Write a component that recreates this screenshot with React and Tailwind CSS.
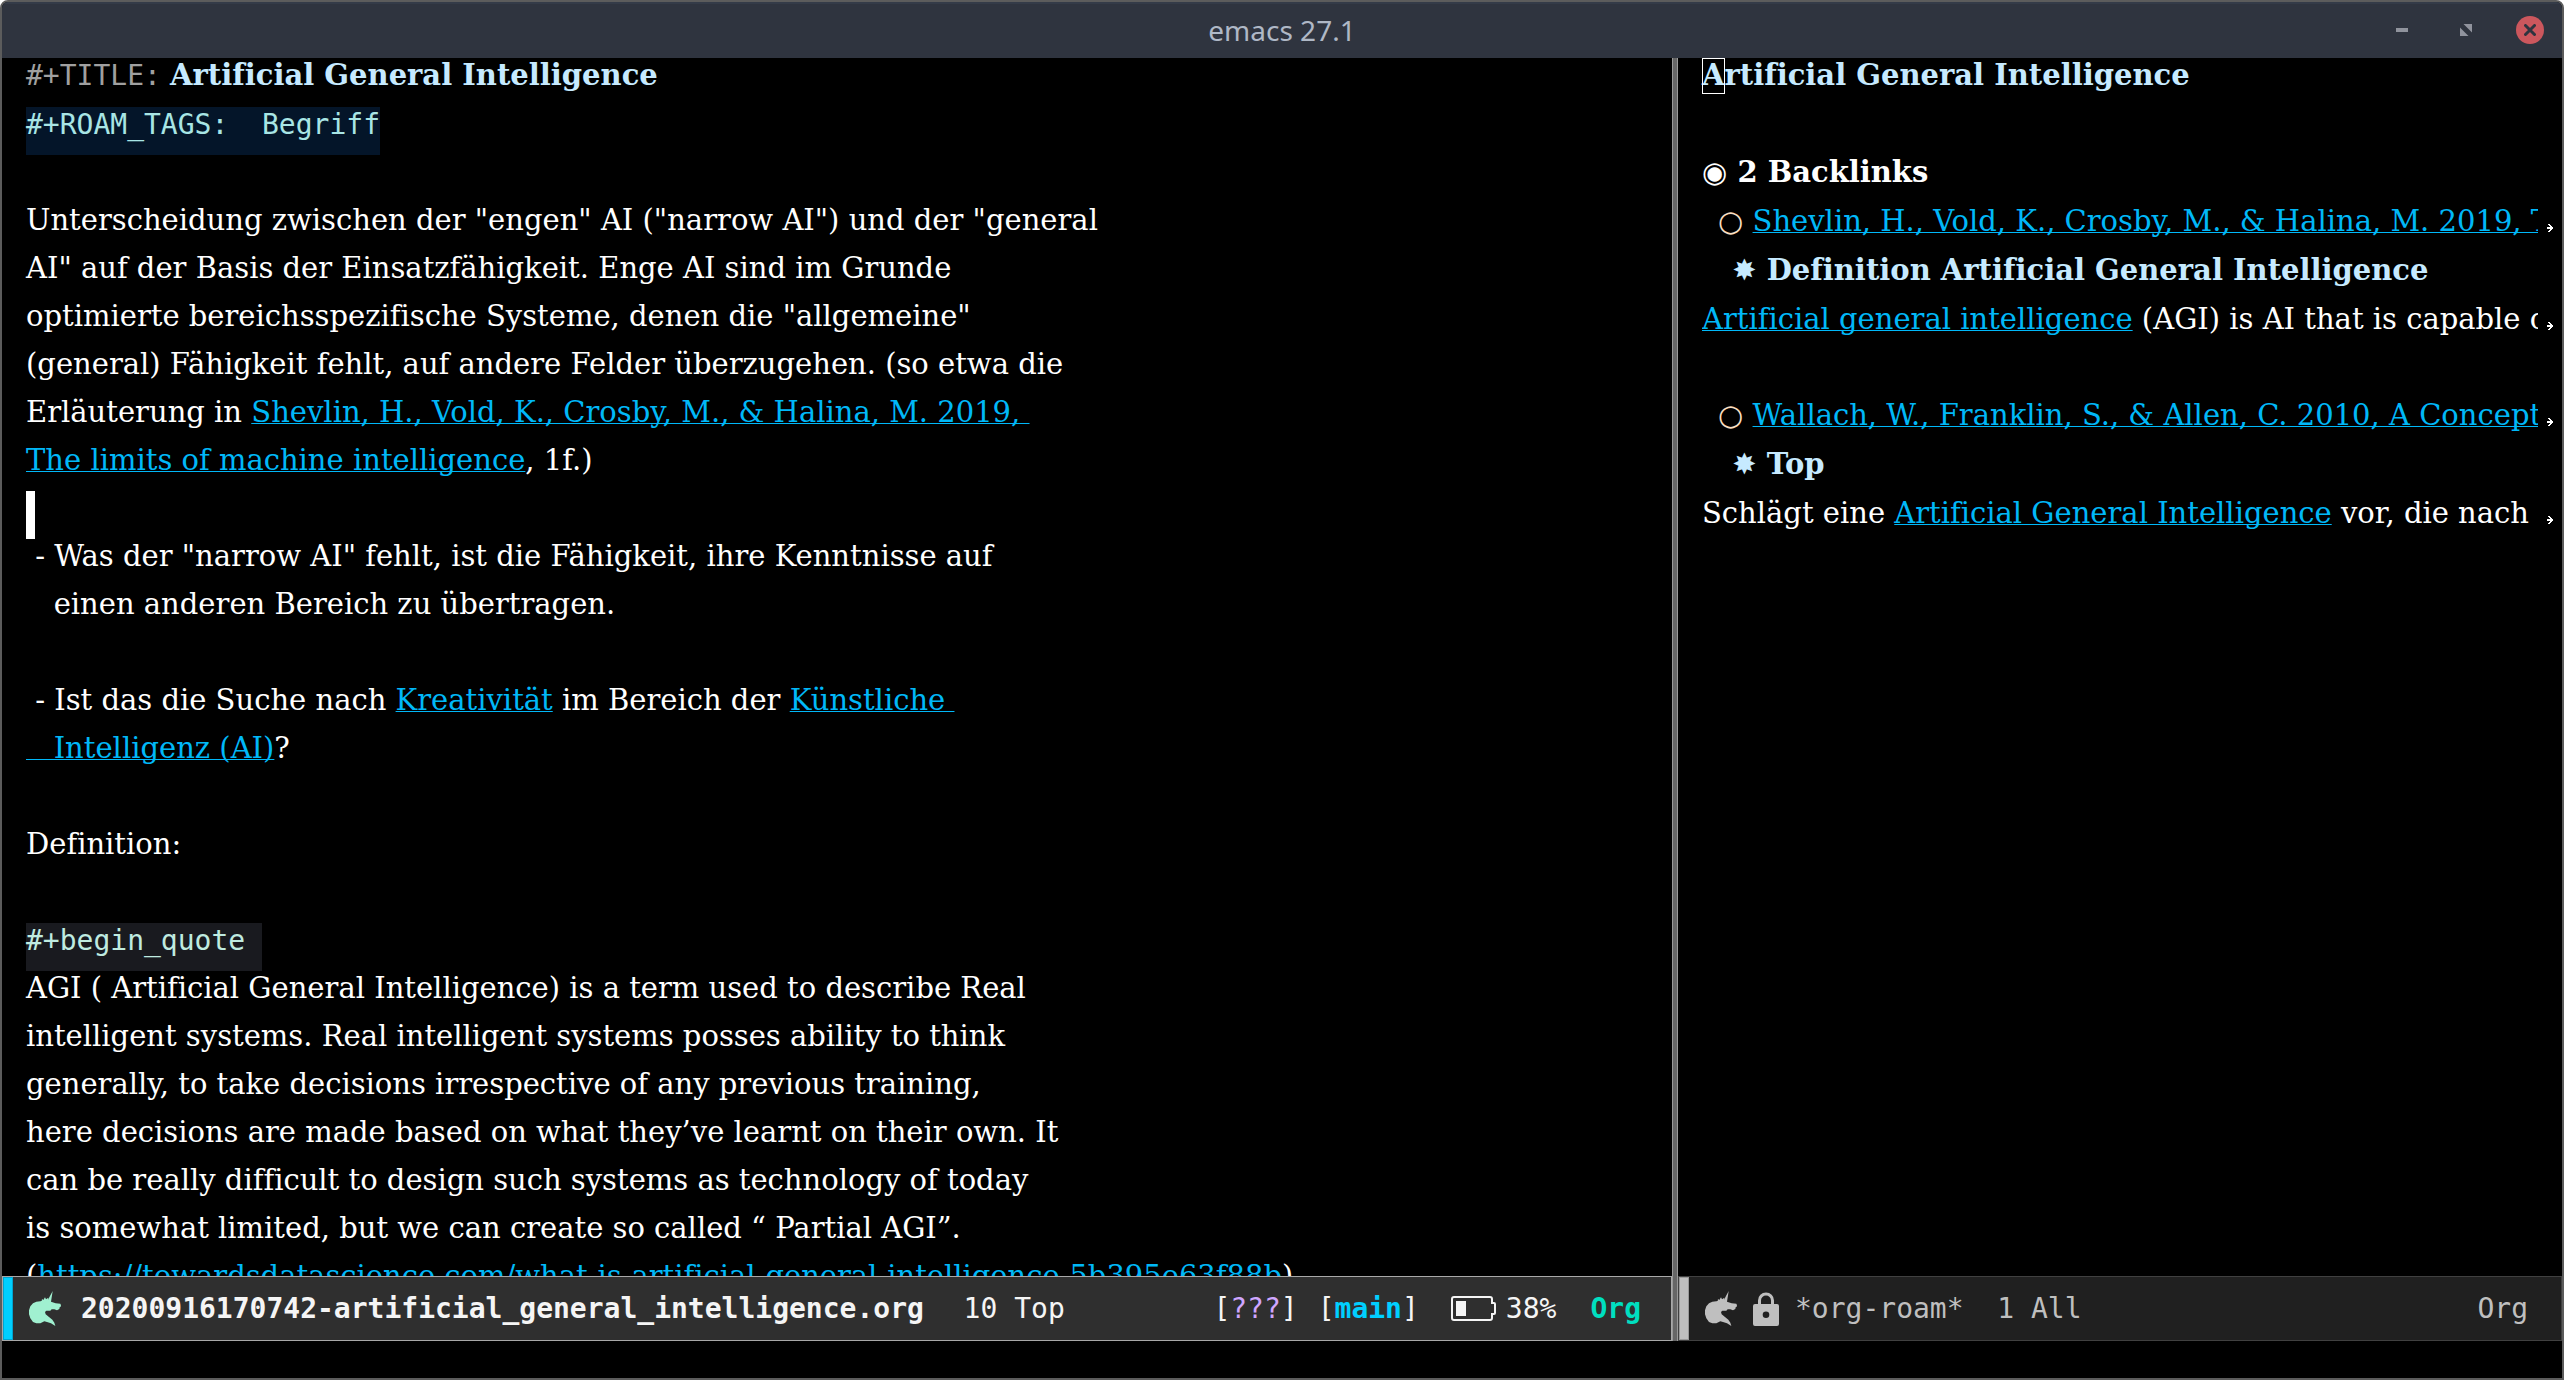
const LINK =
  'text-[#00b8f8] underline decoration-1 underline-offset-1 [text-decoration-skip-ink:none]';

function Link({ children }) {
  return (
    <a href="#" className={LINK}>
      {children}
    </a>
  );
}

function Row({ children, tall = false }) {
  return (
    <div className={tall ? 'h-[49px] shrink-0' : 'h-12 shrink-0'}>{children}</div>
  );
}

function Unicorn() {
  return (
    <svg viewBox="0 0 96 105" className="h-[35px] w-8 shrink-0 fill-current" aria-hidden="true">
      <path d="M71 0L66 32L80 37L94 38L96 43L95 47L92 49L91 54L84 58L76 55L68 55L64 59L52 59L48 63L50 70L60 78L70 86L76 95L79 105L66 97L54 93L46 91L34 97L22 97L12 93L4 82L0 70L0 58L4 46L12 37L22 32L34 31L38 30L39 24L43 27L48 19L51 25L58 20L57 26Z" />
    </svg>
  );
}

function Lock() {
  return (
    <svg viewBox="0 0 26 34" className="h-[34px] w-[26px] shrink-0" aria-hidden="true">
      <path d="M6.5 13V8.500a6.500 6.500 0 0 1 13 0V13" fill="none" stroke="currentColor" strokeWidth="3" />
      <path
        fillRule="evenodd"
        fill="currentColor"
        d="M2 12H24a2 2 0 0 1 2 2V32a2 2 0 0 1-2 2H2a2 2 0 0 1-2-2V14a2 2 0 0 1 2-2ZM13 19.500a3.300 3.300 0 1 0 0 6.600a3.300 3.300 0 1 0 0-6.600Z"
      />
    </svg>
  );
}

function Battery() {
  return (
    <svg viewBox="0 0 45 25" className="h-[25px] w-[45px] shrink-0" aria-hidden="true">
      <path
        d="M3 1H39a2 2 0 0 1 2 2V7H43a1 1 0 0 1 1 1V17a1 1 0 0 1-1 1H41V22a2 2 0 0 1-2 2H3a2 2 0 0 1-2-2V3a2 2 0 0 1 2-2Z"
        fill="none"
        stroke="#f5f5f5"
        strokeWidth="2"
      />
      <rect x="5" y="5" width="10" height="15" fill="#f5f5f5" />
    </svg>
  );
}

function Continued() {
  return (
    <svg viewBox="0 0 6 8" className="h-2 w-1.5" shapeRendering="crispEdges" aria-hidden="true">
      <path d="M1 0H3V1H4V2H5V3H6V5H5V6H4V7H3V8H1V7H2V6H3V5H0V3H3V2H2V1H1Z" fill="#fff" />
    </svg>
  );
}

function CutRow({ children, tall = false }) {
  return (
    <Row tall={tall}>
      <div className="flex">
        <div className="min-w-0 flex-1 overflow-hidden whitespace-pre">{children}</div>
        <div className="flex w-6 shrink-0 items-center justify-center pt-3">
          <Continued />
        </div>
      </div>
    </Row>
  );
}

function TitleBar() {
  return (
    <header className="grid h-14 shrink-0 grid-cols-[1fr_auto_1fr] items-center border-t-2 border-[#343b48] bg-[#2f343f] pb-0.5 font-['Noto_Sans'] text-[#afb8c6]">
      <span />
      <h1 className="text-[28px] leading-8">emacs 27.1</h1>
      <div className="flex justify-end gap-9 pr-[18px] text-[#90939d]">
        <button aria-label="Minimize" className="flex size-7 items-center justify-center">
          <svg viewBox="0 0 12 4" className="h-1 w-3 fill-current"><path d="M0 0H12V4H0Z" /></svg>
        </button>
        <button aria-label="Restore" className="flex size-7 items-center justify-center">
          <svg viewBox="0 0 12 12" className="size-3 fill-current"><path d="M3.500 0H12V8.500ZM0 3.500V12H8.500Z" /></svg>
        </button>
        <button aria-label="Close" className="flex size-7 items-center justify-center rounded-full bg-[#cc575d]">
          <svg viewBox="0 0 12 12" className="size-3"><path d="M1.500 1.500L10.500 10.500M10.500 1.500L1.500 10.500" stroke="#2f343f" strokeWidth="3" strokeLinecap="round" /></svg>
        </button>
      </div>
    </header>
  );
}

function NotesPane() {
  return (
    <section className="flex min-h-0 flex-1 flex-col overflow-hidden whitespace-pre pl-6">
      <Row tall>
        <span className="font-['DejaVu_Sans_Mono'] text-[28px] text-[#a0a0a0]">#+TITLE:</span>
        <span> </span>
        <b className="text-[#c6eaff]">Artificial General Intelligence</b>
      </Row>
      <Row>
        <span className="inline-block h-12 bg-[#041529] font-['DejaVu_Sans_Mono'] text-[28px] text-[#a8e5e5]">#+ROAM_TAGS:  Begriff</span>
      </Row>
      <Row />
      <Row>Unterscheidung zwischen der "engen" AI ("narrow AI") und der "general</Row>
      <Row>AI" auf der Basis der Einsatzfähigkeit. Enge AI sind im Grunde</Row>
      <Row>optimierte bereichsspezifische Systeme, denen die "allgemeine"</Row>
      <Row>(general) Fähigkeit fehlt, auf andere Felder überzugehen. (so etwa die</Row>
      <Row>Erläuterung in <Link>{'Shevlin, H., Vold, K., Crosby, M., & Halina, M. 2019, '}</Link></Row>
      <Row><Link>The limits of machine intelligence</Link>, 1f.)</Row>
      <Row><div className="h-12 w-[9px] bg-white" /></Row>
      <Row>{' - Was der "narrow AI" fehlt, ist die Fähigkeit, ihre Kenntnisse auf'}</Row>
      <Row>{'   einen anderen Bereich zu übertragen.'}</Row>
      <Row />
      <Row>{' - Ist das die Suche nach '}<Link>Kreativität</Link>{' im Bereich der '}<Link>{'Künstliche '}</Link></Row>
      <Row><Link>{'   Intelligenz (AI)'}</Link>?</Row>
      <Row />
      <Row>Definition:</Row>
      <Row />
      <Row>
        <span className="inline-block h-12 bg-[#191a1f] font-['DejaVu_Sans_Mono'] text-[28px] text-[#bfebe0]">{'#+begin_quote '}</span>
      </Row>
      <Row>AGI ( Artificial General Intelligence) is a term used to describe Real</Row>
      <Row>intelligent systems. Real intelligent systems posses ability to think</Row>
      <Row>generally, to take decisions irrespective of any previous training,</Row>
      <Row>here decisions are made based on what they’ve learnt on their own. It</Row>
      <Row>can be really difficult to design such systems as technology of today</Row>
      <Row>is somewhat limited, but we can create so called “ Partial AGI”.</Row>
      <Row>(<Link>https://towardsdatascience.com/what-is-artificial-general-intelligence-5b395e63f88b</Link>)</Row>
    </section>
  );
}

function BacklinksPane() {
  return (
    <section className="flex min-h-0 flex-1 flex-col overflow-hidden whitespace-pre pl-6">
      <Row tall>
        <b className="text-[#c6eaff]"><span className="inline-block h-9 outline-1 -outline-offset-1 outline-white">A</span>rtificial General Intelligence</b>
      </Row>
      <Row />
      <Row tall><b>◉ 2 Backlinks</b></Row>
      <CutRow tall><span className="pl-4 text-[#f8dec0]">○</span> <Link>Shevlin, H., Vold, K., Crosby, M., & Halina, M. 2019, The limits of machine intelligence</Link></CutRow>
      <Row tall><b className="text-[#c6eaff]">{'   ✸ Definition Artificial General Intelligence'}</b></Row>
      <CutRow><Link>Artificial general intelligence</Link> (AGI) is AI that is capable of</CutRow>
      <Row />
      <CutRow tall><span className="pl-4 text-[#f8dec0]">○</span> <Link>Wallach, W., Franklin, S., & Allen, C. 2010, A Conceptual</Link></CutRow>
      <Row tall><b className="text-[#c6eaff]">{'   ✸ Top'}</b></Row>
      <CutRow>Schlägt eine <Link>Artificial General Intelligence</Link>{' vor, die nach '}</CutRow>
    </section>
  );
}

export default function App() {
  return (
    <div className="h-screen bg-white">
      <div className="flex h-full flex-col overflow-hidden rounded-t-lg border-2 border-[#5c5c5c] bg-black text-[29px] leading-[35px] text-white [font-variant-ligatures:none]">
        <TitleBar />
        <main className="flex min-h-0 flex-1 font-['DejaVu_Serif','DejaVu_Sans',serif]">
          <div className="flex min-w-0 flex-[1670] flex-col">
            <NotesPane />
            <footer className="flex h-[65px] shrink-0 items-center whitespace-pre border border-[#a8a8a8] bg-[#2f2f2f] pr-[30px] font-['DejaVu_Sans_Mono'] text-[28px] leading-9 text-[#f5f5f5]">
              <div className="h-full w-2.5 border border-[#00a5d0] bg-[#00cfff]" />
              <div className="ml-4 flex items-center text-[#a0f0d0]"><Unicorn /></div>
              <b className="ml-5">20200916170742-artificial_general_intelligence.org</b>
              <span className="ml-1.5">{'  10 Top'}</span>
              <div className="ml-auto flex items-center">
                <span>[<span className="text-[#cfa6ff]">???</span>]</span>
                <span className="ml-5">[<b className="text-[#00cfff]">main</b>]</span>
                <span className="ml-8 mr-2.5 flex"><Battery /></span>
                <span>38%</span>
                <b className="ml-[34px] text-[#00dfc0]">Org</b>
              </div>
            </footer>
          </div>
          <div className="w-1.5 shrink-0 border-x border-[#999999] bg-[#666666]" />
          <div className="flex min-w-0 flex-[884] flex-col">
            <BacklinksPane />
            <footer className="flex h-[65px] shrink-0 items-center whitespace-pre border border-[#404040] bg-[#202020] pr-[33px] font-['DejaVu_Sans_Mono'] text-[28px] leading-9 text-[#bfbfbf]">
              <div className="h-full w-2.5 border border-[#999999] bg-[#bfbfbf]" />
              <div className="ml-4 flex items-center gap-4"><Unicorn /><Lock /></div>
              <span className="ml-4">*org-roam*  1 All</span>
              <span className="ml-auto">Org</span>
            </footer>
          </div>
        </main>
        <div className="h-[37px] shrink-0" />
      </div>
    </div>
  );
}
